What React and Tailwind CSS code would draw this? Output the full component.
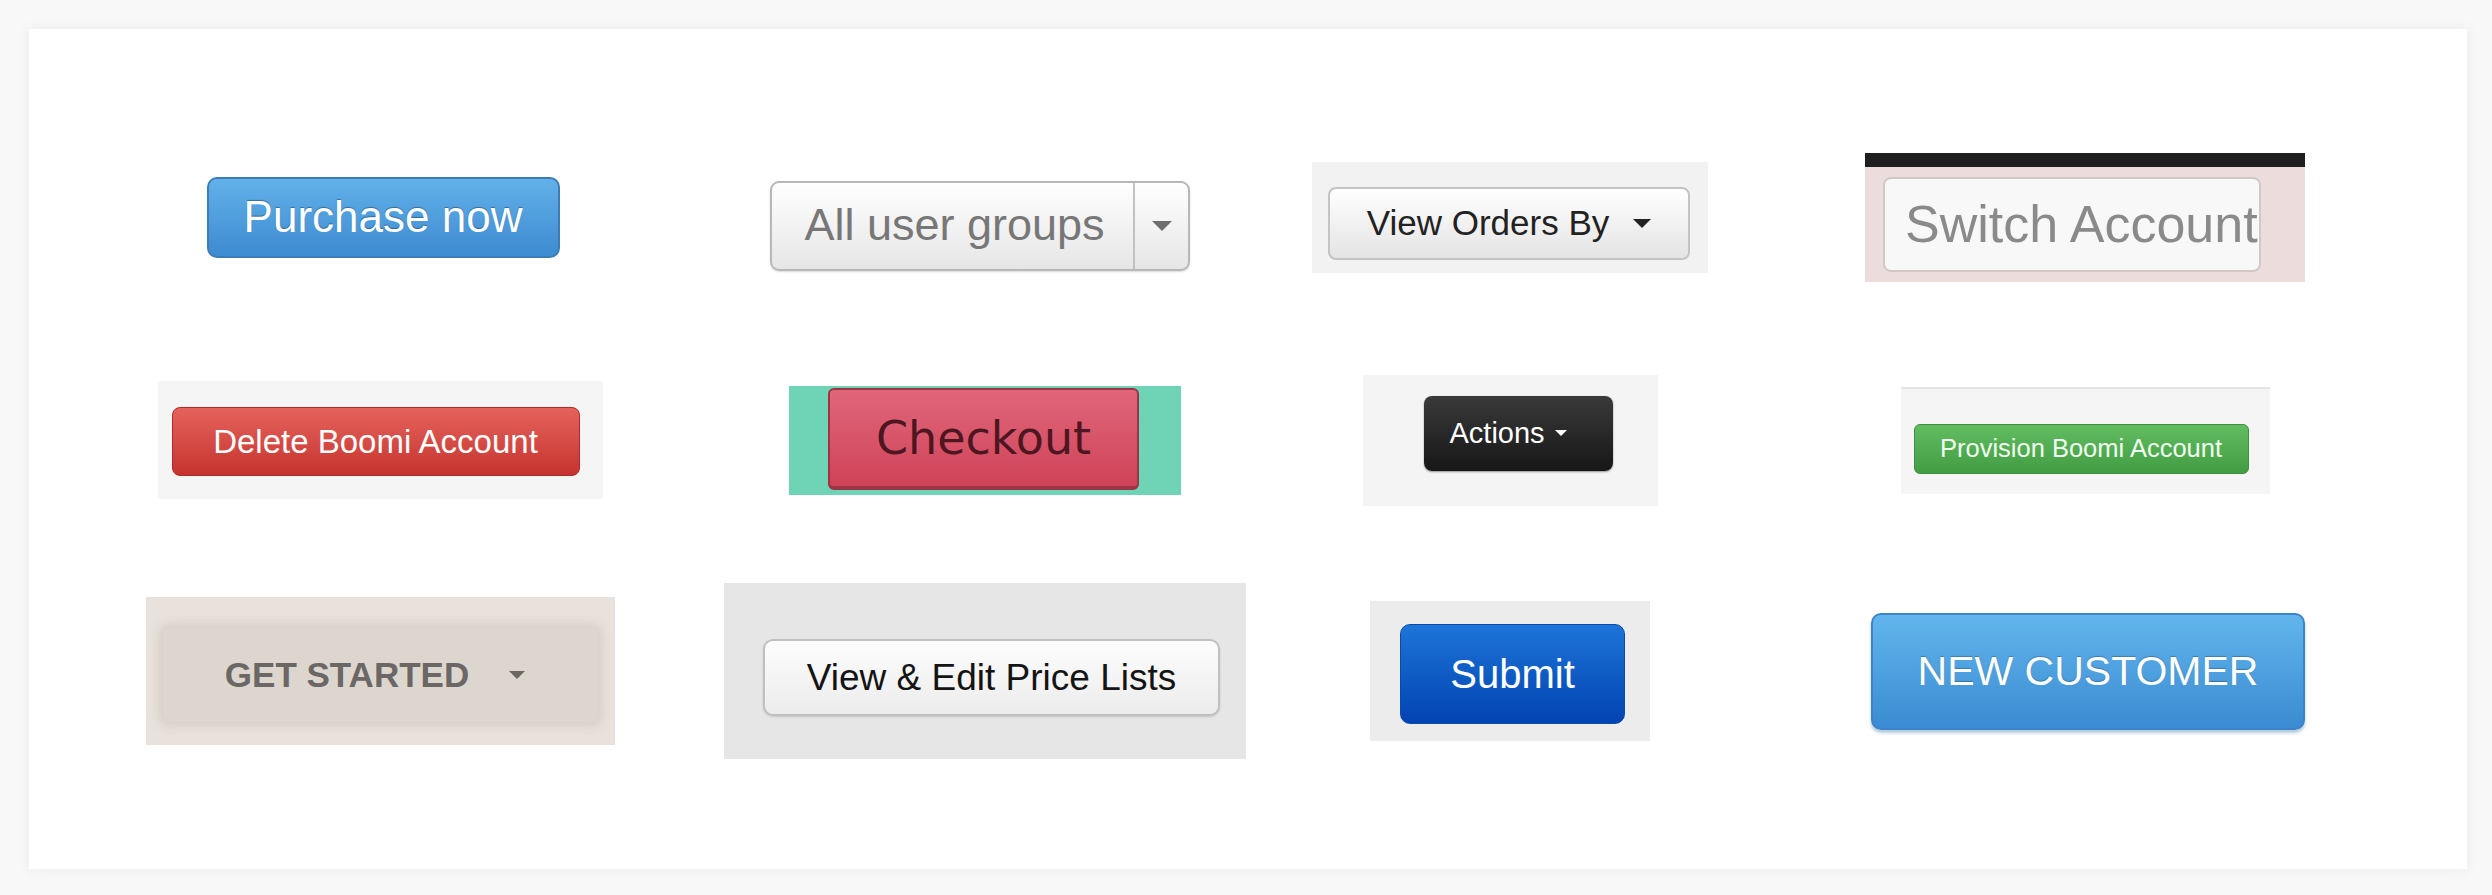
import React from "react";

const font = { fontFamily: '"Liberation Sans", Arial, sans-serif' };

const Caret = ({ w = 18, h = 9, color = "#333", className = "" }) => (
    <svg width={w} height={h} viewBox="0 0 18 9" className={className}>
        <polygon points="0,0 18,0 9,9" fill={color} />
    </svg>
);

const App = () => {
    return (
        <div className="min-h-screen w-full bg-[#f8f8f8] pt-[29px] pl-[29px]" style={font}>
            <div className="w-[2438px] h-[840px] bg-white shadow-[0_0_14px_rgba(0,0,0,0.06)] pl-[49px] pt-[77px]">
                <div className="grid grid-cols-[604px_606px_444px_706px] grid-rows-[222px_224px_238px] items-center justify-items-center">
                    {/* row 1 */}
                    <button className="w-[353px] h-[81px] ml-[6px] rounded-[10px] border-2 border-[#3c7db6] bg-gradient-to-b from-[#62b1ea] to-[#3d8bd0] text-white text-[44px] leading-none [text-shadow:0_-1px_1px_rgba(0,0,0,0.35)]">
                        Purchase now
                    </button>

                    <div className="flex w-[420px] h-[90px] mt-[18px] mr-[10px] rounded-[9px] border-2 border-[#b8b8b8] bg-gradient-to-b from-[#ffffff] to-[#e6e6e6] shadow-[0_1px_2px_rgba(0,0,0,0.15)]">
                        <div className="flex flex-1 items-center justify-center text-[45px] text-[#777] pb-[2px] pl-[4px]">
                            All user groups
                        </div>
                        <div className="flex w-[55px] items-center justify-center border-l-2 border-[#c2c2c2]">
                            <Caret w={20} h={10} color="#6e6e6e" />
                        </div>
                    </div>

                    <div className="w-[396px] h-[111px] bg-[#f2f2f2] pl-[16px] pt-[25px]">
                        <div className="flex items-center justify-center gap-[24px] w-[362px] h-[73px] rounded-[8px] border-2 border-[#c4c4c4] bg-gradient-to-b from-[#ffffff] to-[#e4e4e4] text-[35px] text-[#222]">
                            <span>View Orders By</span>
                            <Caret w={18} h={9} color="#222" />
                        </div>
                    </div>

                    <div className="w-[440px] h-[129px] bg-[#ecdcdc] border-t-[14px] border-[#1f1f1f] pl-[18px] pt-[10px]">
                        <div className="w-[378px] h-[95px] rounded-[8px] border-2 border-[#d3c8c8] bg-[#f8f8f8] overflow-hidden whitespace-nowrap pl-[20px] flex items-center text-[52px] text-[#8a8a8a]">
                            Switch Account
                        </div>
                    </div>

                    {/* row 2 */}
                    <div className="w-[445px] h-[118px] bg-[#f5f5f5] pl-[14px] pt-[26px]">
                        <button className="w-[408px] h-[69px] rounded-[8px] border border-[#b02a26] bg-gradient-to-b from-[#e5625c] to-[#c6322e] text-white text-[33px] leading-none">
                            Delete Boomi Account
                        </button>
                    </div>

                    <div className="w-[392px] h-[109px] bg-[#6fd3b5] pl-[39px] pt-[2px]">
                        <button
                            className="w-[311px] h-[102px] rounded-[6px] border-2 border-b-4 border-[#9c3445] bg-gradient-to-b from-[#e0667a] to-[#cf4258] text-[#4d1621] text-[46px] leading-none"
                            style={{ fontFamily: '"DejaVu Sans", sans-serif' }}
                        >
                            Checkout
                        </button>
                    </div>

                    <div className="w-[295px] h-[131px] bg-[#f4f4f4] pl-[61px] pt-[21px]">
                        <button className="flex items-center gap-[10px] w-[189px] h-[75px] pl-[26px] rounded-[8px] bg-gradient-to-b from-[#3a3a3a] to-[#171717] text-white text-[29px] leading-none shadow-[0_1px_2px_rgba(0,0,0,0.4)]">
                            <span>Actions</span>
                            <Caret w={12} h={6} color="#ffffff" />
                        </button>
                    </div>

                    <div className="w-[369px] h-[107px] bg-[#f5f5f5] border-t-2 border-[#e4e4e4] pl-[13px] pt-[35px]">
                        <button className="w-[335px] h-[50px] rounded-[6px] border border-[#3e8f3e] bg-gradient-to-b from-[#62bd62] to-[#429c42] text-[#f0fff0] text-[25.5px] leading-none">
                            Provision Boomi Account
                        </button>
                    </div>

                    {/* row 3 */}
                    <div className="w-[469px] h-[148px] bg-[#e9e1db] pl-[17px] pt-[31px]">
                        <div className="flex items-center justify-center gap-[40px] w-[435px] h-[94px] pr-[10px] rounded-[6px] bg-[#ddd6cf] shadow-[0_0_10px_4px_rgba(205,197,190,0.7)] text-[35px] font-bold text-[#6b6765]">
                            <span>GET STARTED</span>
                            <Caret w={16} h={8} color="#6b6765" />
                        </div>
                    </div>

                    <div className="w-[522px] h-[176px] bg-[#e6e6e6] pl-[39px] pt-[56px]">
                        <button className="w-[457px] h-[77px] rounded-[10px] border-2 border-[#c0c0c0] bg-gradient-to-b from-[#fdfdfd] to-[#ececec] text-[#141414] text-[37px] leading-none shadow-[0_1px_2px_rgba(0,0,0,0.15)]">
                            View &amp; Edit Price Lists
                        </button>
                    </div>

                    <div className="w-[280px] h-[140px] bg-[#ececec] pl-[30px] pt-[23px]">
                        <button className="w-[225px] h-[100px] rounded-[10px] border border-[#0a4aa8] bg-gradient-to-b from-[#1e74d8] to-[#0443b2] text-white text-[40px] leading-none">
                            Submit
                        </button>
                    </div>

                    <button className="w-[434px] h-[117px] ml-[6px] rounded-[10px] border-2 border-[#3a85c8] bg-gradient-to-b from-[#62b6ec] to-[#3a8bd2] text-white text-[41px] leading-none shadow-[0_3px_3px_rgba(40,100,160,0.35)] [text-shadow:0_-1px_1px_rgba(0,0,0,0.25)]">
                        NEW CUSTOMER
                    </button>
                </div>
            </div>
        </div>
    );
};

export default App;
